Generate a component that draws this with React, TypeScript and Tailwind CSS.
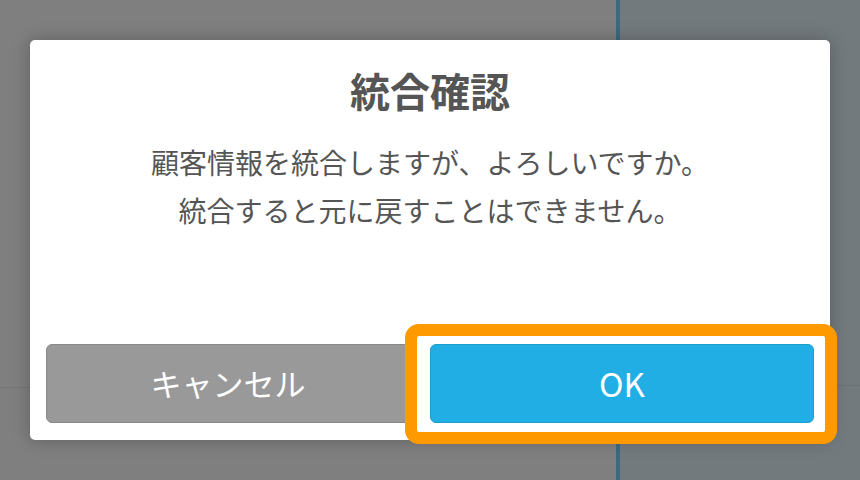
export default function App() {
  const font = { fontFamily: '"Noto Sans CJK JP", "Noto Sans", sans-serif' };
  return (
    <div className="relative w-[860px] h-[480px] overflow-hidden bg-[#7f7f7f]" style={font}>
      {/* dimmed background app */}
      <div className="flex h-full w-full">
        <div className="flex-1 flex flex-col">
          <div className="h-[387px]" />
          <div className="h-px bg-[#767676]" />
        </div>
        <div className="w-[4px] bg-[#3d6a80]" />
        <div className="w-[240px] bg-[#737a7d] flex flex-col">
          <div className="h-[385px]" />
          <div className="h-px bg-[#6c7275]" />
        </div>
      </div>

      {/* modal */}
      <div className="absolute left-[30px] top-[40px] w-[800px] h-[400px] bg-white rounded-[5px] shadow-[0_0_18px_rgba(0,0,0,0.25)] flex flex-col">
        <div className="pt-[26px] text-center text-[40px] leading-[48px] font-bold text-[#555555]">統合確認</div>
        <div className="mt-[24px] text-center text-[28px] leading-[48px] text-[#555555]">
          <div>顧客情報を統合しますが、よろしいですか。</div>
          <div>統合すると元に戻すことはできません。</div>
        </div>
        <div className="flex-1" />
        <div className="flex px-[16px] pb-[17px] gap-[20px]">
          <div className="w-[364px] h-[79px] rounded-[6px] bg-[#999999] border border-[#888888] flex items-center justify-center text-white text-[31px]">キャンセル</div>
          <div className="w-[384px] h-[79px] rounded-[6px] bg-[#20aee4] border border-[#1e9ccc] flex items-center justify-center text-white text-[33px]">OK</div>
        </div>
      </div>

      {/* highlight frame */}
      <div className="absolute left-[405px] top-[324px] w-[432px] h-[120px] border-[12px] border-[#ff9900] rounded-[14px]" />
    </div>
  );
}
